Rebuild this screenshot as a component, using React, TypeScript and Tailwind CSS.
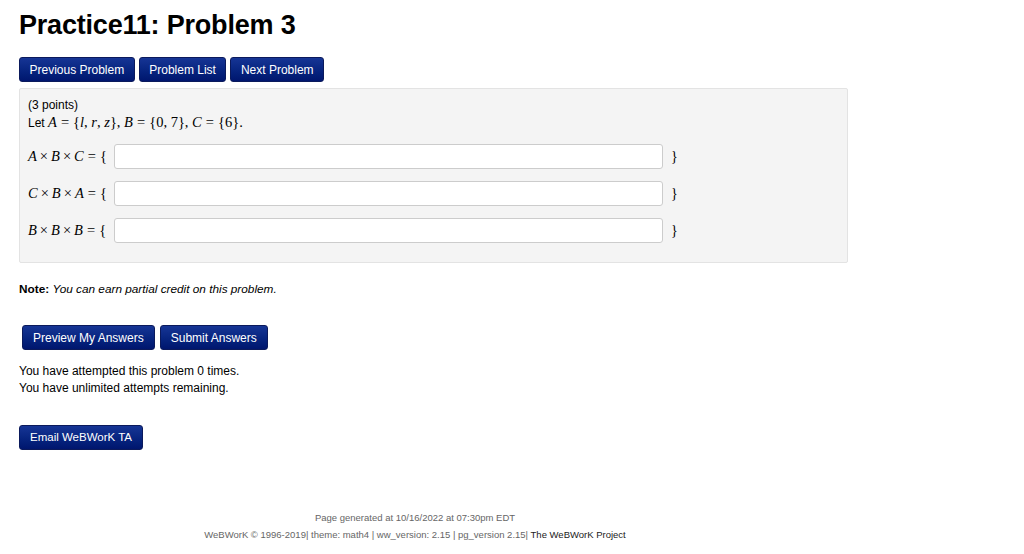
import React from "react";

const btn =
  "h-[25px] rounded-[3px] border border-[#0b1a5c] bg-gradient-to-b from-[#163595] to-[#00166e] text-white leading-none";

const V = ({ c }: { c: string }) => <i className="italic">{c}</i>;
const Eq = () => <span className="mx-[4px]">=</span>;
const X = () => <span className="mx-[3px]">×</span>;

const rows = [
  ["A", "B", "C"],
  ["C", "B", "A"],
  ["B", "B", "B"],
];

export default function App() {
  return (
    <div className="min-h-[554px] bg-white text-black font-['Liberation_Sans',Arial,sans-serif]">
      <div className="pl-[19px] pt-[10px]">
        <h1 className="text-[27px] font-bold leading-[30px] tracking-[-0.2px]">Practice11: Problem 3</h1>

        {/* nav buttons */}
        <div className="flex gap-[4px] mt-[17px] text-[12px]">
          <button className={`${btn} px-[9.5px]`}>Previous Problem</button>
          <button className={`${btn} px-[9.5px]`}>Problem List</button>
          <button className={`${btn} px-[9.5px]`}>Next Problem</button>
        </div>

        {/* problem box */}
        <div className="mt-[6px] w-[829px] h-[175px] bg-[#f4f4f4] border border-[#e3e3e3] rounded-[2px] pl-[8px] pt-[9px]">
          <div className="text-[12px] leading-[14px]">(3 points)</div>
          <div className="text-[12px] leading-[17px] mt-[2px]">
            Let{" "}
            <span className="font-['Liberation_Serif',serif] text-[14.5px]">
              <V c="A" /><Eq />{"{"}<V c="l" />, <V c="r" />, <V c="z" />{"}"}, <V c="B" /><Eq />{"{"}0, 7{"}"}, <V c="C" /><Eq />{"{"}6{"}"}.
            </span>
          </div>
          <div className="flex flex-col gap-[12px] mt-[12px]">
            {rows.map((r, i) => (
              <div key={i} className="flex items-center h-[25px]">
                <span className="w-[86px] font-['Liberation_Serif',serif] text-[14.5px] whitespace-nowrap">
                  <V c={r[0]} /><X /><V c={r[1]} /><X /><V c={r[2]} /><Eq />{"{"}
                </span>
                <div className="w-[549px] h-[25px] bg-white border border-[#cccccc] rounded-[3px]" />
                <span className="ml-[8px] font-['Liberation_Serif',serif] text-[14px]">{"}"}</span>
              </div>
            ))}
          </div>
        </div>

        <p className="mt-[19px] text-[11.8px] leading-[14px]">
          <b>Note:</b> <i>You can earn partial credit on this problem.</i>
        </p>

        <div className="flex gap-[5px] mt-[29px] ml-[3px] text-[12px]">
          <button className={`${btn} px-[10px]`}>Preview My Answers</button>
          <button className={`${btn} px-[10px]`}>Submit Answers</button>
        </div>

        <div className="mt-[13px] text-[12px] leading-[17px]">
          <div>You have attempted this problem 0 times.</div>
          <div>You have unlimited attempts remaining.</div>
        </div>

        <div className="mt-[28px] text-[11.5px]">
          <button className={`${btn} px-[10px]`}>Email WeBWorK TA</button>
        </div>
      </div>

      <footer className="w-[830px] text-center text-[9.5px] leading-[17px] text-[#666] mt-[59px]">
        <div>Page generated at 10/16/2022 at 07:30pm EDT</div>
        <div>
          WeBWorK © 1996-2019| theme: math4 | ww_version: 2.15 | pg_version 2.15|{" "}
          <span className="text-[#222]">The WeBWorK Project</span>
        </div>
      </footer>
    </div>
  );
}
